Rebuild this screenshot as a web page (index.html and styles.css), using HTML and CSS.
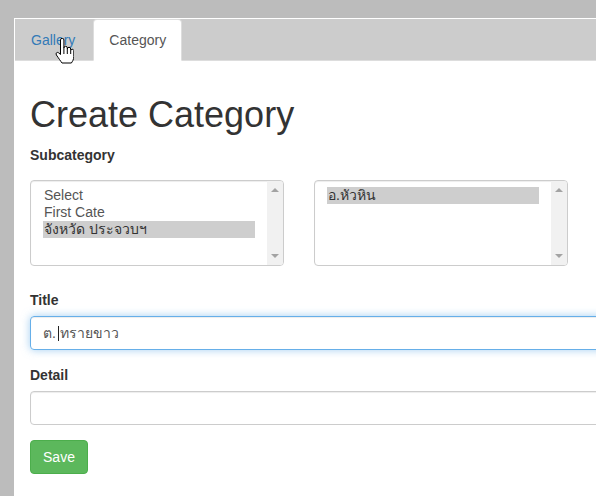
FILE: index.html
```html
<!DOCTYPE html>
<html>
<head>
<meta charset="utf-8">
<link rel="stylesheet" href="styles.css">
</head>
<body>
<div class="frame">
  <ul class="tabs">
    <li class="tab"><a class="tab-link link-blue">Gallery</a></li>
    <li class="tab active"><a class="tab-link">Category</a></li>
  </ul>
  <div class="content">
    <h1 class="title">Create Category</h1>
    <label class="label label-sub">Subcategory</label>
    <div class="selects">
      <div class="listbox">
        <div class="options">
          <div class="option">Select</div>
          <div class="option">First Cate</div>
          <div class="option selected">จังหวัด ประจวบฯ</div>
        </div>
        <div class="scrollbar"><span class="arrow up"></span><span class="arrow down"></span></div>
      </div>
      <div class="listbox">
        <div class="options">
          <div class="option selected">อ.หัวหิน</div>
        </div>
        <div class="scrollbar"><span class="arrow up"></span><span class="arrow down"></span></div>
      </div>
    </div>
    <div class="group">
      <label class="label">Title</label>
      <div class="input focus">ต.<span class="caret"></span>ทรายขาว</div>
    </div>
    <div class="group">
      <label class="label">Detail</label>
      <div class="input"></div>
    </div>
    <button class="btn">Save</button>
  </div>
</div>
<svg class="cursor" width="19" height="26" viewBox="0 0 19 26">
  <path d="M5.5,2 a1.7,1.7 0 0 1 3.4,0 V10 a1.7,1.7 0 0 1 3.4,0 V11 a1.7,1.7 0 0 1 3.4,0 V12.5 a1.6,1.6 0 0 1 3.1,0 V18.5 c0,3 -1.4,5 -2.4,6.5 H7 C5.5,23 3.5,20 1.4,17 c-1,-1.6 0.5,-3.4 2.2,-2.2 L5.5,16.5 Z" fill="#fff" stroke="#000" stroke-width="1" stroke-linejoin="round"/>
  <path d="M8.9,10 V16 M12.3,11 V16 M15.7,12.5 V16" stroke="#000" stroke-width="1" fill="none"/>
</svg>
</body>
</html>
```
FILE: styles.css
```css
html, body {
  margin: 0;
  padding: 0;
}
body {
  background: #bcbcbc;
  font-family: "Liberation Sans", Arial, sans-serif;
  font-size: 14px;
  line-height: 20px;
  color: #333;
  width: 596px;
  height: 496px;
  overflow: hidden;
  position: relative;
}
.frame {
  margin: 18px 0 0 14px;
  padding: 1px 0 0 1px;
  background: #fff;
  height: 477px;
  overflow: hidden;
}
.tabs {
  list-style: none;
  margin: 0;
  padding: 0;
  display: flex;
  background: #cccccc;
  border-bottom: 1px solid #dddddd;
  height: 41px;
}
.tab {
  margin-right: 2px;
  margin-bottom: -1px;
}
.tab-link {
  display: block;
  padding: 10px 15px;
  border: 1px solid transparent;
  border-radius: 4px 4px 0 0;
  color: #555;
  line-height: 20px;
}
.link-blue {
  color: #337ab7;
}
.tab.active .tab-link {
  background: #fff;
  border-color: #dddddd #dddddd transparent;
  color: #555;
}
.content {
  padding: 14px 0 0 15px;
}
.title {
  margin: 20px 0 10px;
  font-size: 36px;
  font-weight: 500;
  line-height: 40px;
  color: #333;
}
.label {
  display: block;
  font-weight: bold;
  margin-bottom: 6px;
}
.label-sub {
  margin-bottom: 15px;
}
.selects {
  display: flex;
  gap: 30px;
  margin-bottom: 24px;
}
.listbox {
  width: 254px;
  height: 86px;
  box-sizing: border-box;
  border: 1px solid #ccc;
  border-radius: 4px;
  display: flex;
  overflow: hidden;
  box-shadow: inset 0 1px 1px rgba(0,0,0,.075);
}
.options {
  flex: 1;
  padding: 6px 12px;
  color: #555;
}
.option {
  line-height: 17px;
  padding: 0 1px;
}
.option.selected {
  background: #cecece;
  color: #333;
}
.scrollbar {
  width: 16px;
  background: #f1f1f1;
  display: flex;
  flex-direction: column;
  justify-content: space-between;
  align-items: center;
  padding: 7px 0;
}
.arrow {
  width: 0;
  height: 0;
  border-left: 4px solid transparent;
  border-right: 4px solid transparent;
}
.arrow.up {
  border-bottom: 4px solid #a3a3a3;
}
.arrow.down {
  border-top: 4px solid #a3a3a3;
}
.group {
  margin-bottom: 15px;
}
.input {
  width: calc(100% + 40px);
  height: 34px;
  box-sizing: border-box;
  border: 1px solid #ccc;
  border-radius: 4px;
  padding: 6px 12px;
  color: #555;
  box-shadow: inset 0 1px 1px rgba(0,0,0,.075);
}
.input.focus {
  border-color: #66afe9;
  box-shadow: inset 0 1px 1px rgba(0,0,0,.075), 0 0 8px rgba(102,175,233,.6);
}
.caret {
  display: inline-block;
  width: 1px;
  height: 15px;
  background: #222;
  vertical-align: -3px;
  margin-left: 2px;
  margin-right: 1px;
}
.btn {
  font-family: "Liberation Sans", Arial, sans-serif;
  font-size: 14px;
  line-height: 20px;
  color: #fff;
  background: #5cb85c;
  border: 1px solid #4cae4c;
  border-radius: 4px;
  padding: 6px 12px;
  width: 58px;
  height: 34px;
}
.cursor {
  position: absolute;
  left: 55px;
  top: 38px;
}
```
